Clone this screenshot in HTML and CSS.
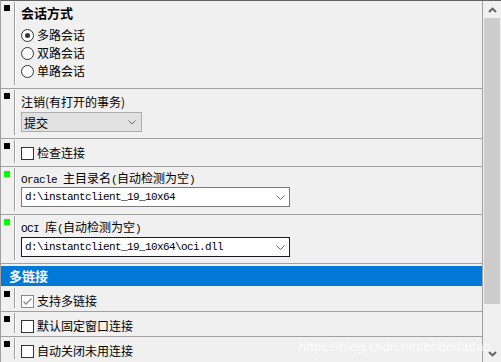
FILE: index.html
```html
<!DOCTYPE html>
<html>
<head>
<meta charset="utf-8">
<link rel="stylesheet" href="styles.css">
</head>
<body>
<div class="window">
  <div class="pane">
    <div class="row row-session">
      <div class="gutter"><span class="mark mark-black"></span></div>
      <div class="vline"></div>
      <div class="body">
        <div class="title">会话方式</div>
        <div class="radios">
          <div class="opt"><span class="radio on"></span>多路会话</div>
          <div class="opt"><span class="radio"></span>双路会话</div>
          <div class="opt"><span class="radio"></span>单路会话</div>
        </div>
      </div>
    </div>
    <div class="row row-logout">
      <div class="gutter"><span class="mark mark-black"></span></div>
      <div class="vline"></div>
      <div class="body">
        <div class="label">注销(有打开的事务)</div>
        <div class="select"><span>提交</span>
          <svg class="chev" width="8" height="5" viewBox="0 0 8 5"><path d="M0.5 0.5 L4 4 L7.5 0.5" fill="none" stroke="#6d6d6d" stroke-width="1"/></svg>
        </div>
      </div>
    </div>
    <div class="row row-check">
      <div class="gutter"><span class="mark mark-black"></span></div>
      <div class="vline"></div>
      <div class="body">
        <div class="opt"><span class="check"></span>检查连接</div>
      </div>
    </div>
    <div class="row row-oracle">
      <div class="gutter"><span class="mark mark-green"></span></div>
      <div class="vline"></div>
      <div class="body">
        <div class="label mono">Oracle <span class="cjk">主目录名</span>(<span class="cjk">自动检测为空</span>)</div>
        <div class="input"><span class="mono">d:\instantclient_19_10x64</span>
          <svg class="chev" width="9" height="5" viewBox="0 0 9 5"><path d="M0.5 0.5 L4.5 4.5 L8.5 0.5" fill="none" stroke="#6d6d6d" stroke-width="1"/></svg>
        </div>
      </div>
    </div>
    <div class="row row-oci">
      <div class="gutter"><span class="mark mark-green"></span></div>
      <div class="vline"></div>
      <div class="body">
        <div class="label mono">OCI <span class="cjk">库</span>(<span class="cjk">自动检测为空</span>)</div>
        <div class="input focus"><span class="mono">d:\instantclient_19_10x64\oci.dll</span>
          <svg class="chev" width="9" height="5" viewBox="0 0 9 5"><path d="M0.5 0.5 L4.5 4.5 L8.5 0.5" fill="none" stroke="#6d6d6d" stroke-width="1"/></svg>
        </div>
      </div>
    </div>
    <div class="header">多链接</div>
    <div class="row row-small first">
      <div class="gutter"><span class="mark mark-black"></span></div>
      <div class="vline"></div>
      <div class="body">
        <div class="opt"><span class="check checked"><svg width="11" height="11" viewBox="0 0 11 11"><path d="M1.5 5.5 L4 8 L9.5 2.5" fill="none" stroke="#8a8a8a" stroke-width="1.4"/></svg></span>支持多链接</div>
      </div>
    </div>
    <div class="row row-small">
      <div class="gutter"><span class="mark mark-black"></span></div>
      <div class="vline"></div>
      <div class="body">
        <div class="opt"><span class="check"></span>默认固定窗口连接</div>
      </div>
    </div>
    <div class="row row-small last">
      <div class="gutter"><span class="mark mark-black"></span></div>
      <div class="vline"></div>
      <div class="body">
        <div class="opt"><span class="check"></span>自动关闭未用连接</div>
      </div>
    </div>
  </div>
  <div class="scroll">
    <div class="sbtn">
      <svg width="9" height="6" viewBox="0 0 9 6"><path d="M1 5 L4.5 1.5 L8 5" fill="none" stroke="#606060" stroke-width="1.8"/></svg>
    </div>
    <div class="thumb"></div>
    <div class="track"></div>
    <div class="sbtn">
      <svg width="9" height="6" viewBox="0 0 9 6"><path d="M1 1 L4.5 4.5 L8 1" fill="none" stroke="#606060" stroke-width="1.8"/></svg>
    </div>
  </div>
  <div class="watermark">https://blog.csdn.net/bobodadao</div>
</div>
</body>
</html>
```

FILE: styles.css
```css
html, body {
  margin: 0;
  padding: 0;
  background: #f0f0f0;
}
body {
  font-family: "Noto Sans CJK SC", "Microsoft YaHei", sans-serif;
  font-size: 12px;
  color: #000;
}
.window {
  position: relative;
  width: 501px;
  height: 362px;
  box-sizing: border-box;
  border-top: 1px solid #646464;
  border-left: 1px solid #a0a0a0;
  display: flex;
  overflow: hidden;
}
.pane {
  width: 481px;
  flex: none;
  border-right: 1px solid #a0a0a0;
  display: flex;
  flex-direction: column;
}
.row {
  display: flex;
  box-sizing: border-box;
  border-bottom: 1px solid #a0a0a0;
  flex: none;
}
.gutter {
  position: relative;
  width: 13px;
  flex: none;
}
.mark {
  position: absolute;
  left: 3px;
  top: 4px;
  width: 6px;
  height: 6px;
}
.mark-black { background: #000; }
.mark-green { background: #00ff00; }
.vline {
  width: 0;
  flex: none;
  border-left: 1px solid #a0a0a0;
  border-right: 1px solid #ffffff;
  margin: 1px 0 3px;
}
.body {
  flex: 1;
  padding-left: 5px;
}
.title {
  font-size: 13px;
  font-weight: bold;
  line-height: 18px;
  height: 18px;
}
.row-session { height: 88px; }
.row-session .body { padding-top: 3px; }
.radios { margin-top: 4px; }
.opt {
  display: flex;
  align-items: center;
  height: 18px;
  line-height: 18px;
  gap: 3px;
  white-space: nowrap;
}
.radio {
  width: 11px;
  height: 11px;
  border: 1px solid #333;
  border-radius: 50%;
  background: #fff;
  position: relative;
  flex: none;
}
.radio.on::after {
  content: "";
  position: absolute;
  left: 3px;
  top: 3px;
  width: 5px;
  height: 5px;
  border-radius: 50%;
  background: #333;
}
.check {
  width: 11px;
  height: 11px;
  border: 1px solid #333;
  background: #fff;
  flex: none;
  display: flex;
}
.check.checked {
  border-color: #8a8a8a;
}
.label {
  height: 18px;
  line-height: 18px;
  white-space: nowrap;
}
.mono {
  font-family: "Liberation Mono", monospace;
  font-size: 11px;
  letter-spacing: -0.6px;
}
.cjk {
  font-family: "Noto Sans CJK SC", sans-serif;
  font-size: 12px;
  letter-spacing: 0;
}
.row-logout { height: 50px; }
.row-logout .body { padding-top: 4px; }
.select {
  margin-top: 1px;
  height: 18px;
  border: 1px solid #adadad;
  background: #e1e1e1;
  display: flex;
  align-items: center;
  justify-content: space-between;
  padding: 0 5px 0 2px;
  box-sizing: content-box;
  width: 112px;
}
.row-check { height: 28px; }
.row-check .body { padding-top: 5px; }
.row-oracle { height: 48px; }
.row-oracle .body { padding-top: 2px; }
.row-oci { height: 49px; }
.row-oci .body { padding-top: 3px; }
.row-oci .input { margin-top: 1px; }
.input {
  width: 260px;
  height: 18px;
  border: 1px solid #7a7a7a;
  background: #fff;
  display: flex;
  align-items: center;
  justify-content: space-between;
  padding: 0 4px 0 3px;
}
.input.focus { border-color: #1a1a1a; }
.header {
  margin-top: 2px;
  height: 20px;
  background: #0078d7;
  color: #fff;
  font-size: 13px;
  font-weight: bold;
  line-height: 20px;
  padding-left: 8px;
  border-bottom: 1px solid #f0f0f0;
}
.row-small { height: 25px; }
.row-small .body { padding-top: 5px; }
.row-small.last { border-bottom: none; flex: 1; }
.scroll {
  width: 18px;
  flex: none;
  display: flex;
  flex-direction: column;
  background: #f0f0f0;
}
.sbtn {
  height: 17px;
  display: flex;
  align-items: center;
  justify-content: center;
  flex: none;
}
.thumb {
  height: 286px;
  margin: 0 1px;
  background: #cdcdcd;
  flex: none;
}
.track { flex: 1; }
.watermark {
  position: absolute;
  right: 10px;
  bottom: 8px;
  font-family: "Liberation Sans", Arial, sans-serif;
  font-size: 13.5px;
  color: rgba(255, 255, 255, 0.7);
  white-space: nowrap;
  pointer-events: none;
}
```
